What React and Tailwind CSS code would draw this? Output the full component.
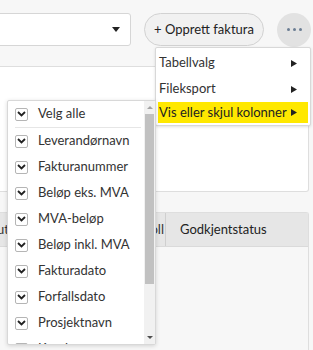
import React from 'react';

const columns = [
  'Leverandørnavn',
  'Fakturanummer',
  'Beløp eks. MVA',
  'MVA-beløp',
  'Beløp inkl. MVA',
  'Fakturadato',
  'Forfallsdato',
  'Prosjektnavn',
  'Kunde',
];

const Check = () => (
  <span className="flex items-center justify-center w-[13px] h-[13px] border border-[#b5b5b5] rounded-[2px] bg-white shrink-0">
    <svg width="9" height="6" viewBox="0 0 9 6">
      <path d="M1 1l3.5 3.5L8 1" stroke="#222" strokeWidth="1.8" fill="none" />
    </svg>
  </span>
);

const Caret = () => (
  <svg width="6" height="7" viewBox="0 0 6 7"><path d="M0 0l6 3.5L0 7z" fill="#222" /></svg>
);

export default function App() {
  return (
    <div className="relative w-[313px] h-[350px] overflow-hidden bg-[#f7f7f7] text-[13px] text-[#333]" style={{ fontFamily: 'Lato, "Open Sans", sans-serif' }}>
      <div className="flex items-center h-[58px] pt-[13px] pb-[12px]">
        <div className="flex items-center justify-end ml-[-20px] w-[151px] h-[33px] bg-white border border-[#d6d6d6] rounded-[3px] pr-[10px]">
          <svg width="8" height="5" viewBox="0 0 8 5"><path d="M0 0h8L4 5z" fill="#222" /></svg>
        </div>
        <button className="ml-[13px] w-[120px] h-[33px] rounded-full border border-[#d2d2d2] bg-[#f1f1f1] text-[13px] text-[#222]">
          + Opprett faktura
        </button>
        <div className="ml-[13px] w-[34px] h-[34px] rounded-full bg-[#e2e2e2] flex items-center justify-center gap-[3px]">
          <span className="w-[3px] h-[3px] rounded-full bg-[#6b7d93]" />
          <span className="w-[3px] h-[3px] rounded-full bg-[#6b7d93]" />
          <span className="w-[3px] h-[3px] rounded-full bg-[#6b7d93]" />
        </div>
      </div>

      <div className="mt-[8px] w-[309px] h-[126px] bg-white border-t border-r border-b border-[#dedede] rounded-r-[3px]" />

      <div className="mt-[20px] w-[309px] h-[140px] border-t border-r border-[#dedede] rounded-tr-[3px]">
        <div className="flex h-[34px] bg-[#e6e6e6] border-b border-[#dadada] items-center">
          <div className="w-[9px] h-full flex items-center justify-end overflow-hidden whitespace-nowrap">
            <span>ut</span>
          </div>
          <div className="w-[157px] h-full flex items-center justify-end border-r border-[#cfcfcf] overflow-hidden whitespace-nowrap pr-[1px]">
            <span>Kontroll</span>
          </div>
          <span className="pl-[14px] text-[#222]">Godkjentstatus</span>
        </div>
      </div>

      <div className="absolute left-[155px] top-[47px] w-[156px] bg-white border border-[#d8d8d8] rounded-[2px] shadow-[0_1px_3px_rgba(0,0,0,0.12)] py-[2px]">
        <div className="flex items-center justify-between h-[26px] pl-[3px] pr-[13px]">
          <span>Tabellvalg</span><Caret />
        </div>
        <div className="flex items-center justify-between h-[26px] pl-[3px] pr-[13px]">
          <span>Fileksport</span><Caret />
        </div>
        <div className="flex items-center justify-between h-[21px] mx-[2px] pl-[1px] pr-[11px] bg-[#ffe800] text-[#222]">
          <span>Vis eller skjul kolonner</span><Caret />
        </div>
      </div>

      <div className="absolute left-[7px] top-[100px] w-[149px] h-[245px] flex bg-white border border-[#d8d8d8] rounded-[2px] shadow-[0_1px_4px_rgba(0,0,0,0.15)] overflow-hidden">
        <div className="flex-1 pl-[7px] pr-[3px]">
          <div className="flex items-center gap-[10px] h-[27px] border-b border-[#e6e6e6]">
            <Check /><span>Velg alle</span>
          </div>
          {columns.map((c) => (
            <div key={c} className="flex items-center gap-[10px] h-[26px]">
              <Check /><span>{c}</span>
            </div>
          ))}
        </div>
        <div className="w-[11px] flex flex-col bg-[#f1f1f1]">
          <div className="h-[13px] flex items-center justify-center">
            <svg width="6" height="3" viewBox="0 0 6 3"><path d="M0 3h6L3 0z" fill="#a3a3a3" /></svg>
          </div>
          <div className="h-[170px] mx-[1px] bg-[#c1c1c1]" />
          <div className="flex-1" />
          <div className="h-[13px] flex items-center justify-center">
            <svg width="6" height="3" viewBox="0 0 6 3"><path d="M0 0h6L3 3z" fill="#505050" /></svg>
          </div>
        </div>
      </div>
    </div>
  );
}
